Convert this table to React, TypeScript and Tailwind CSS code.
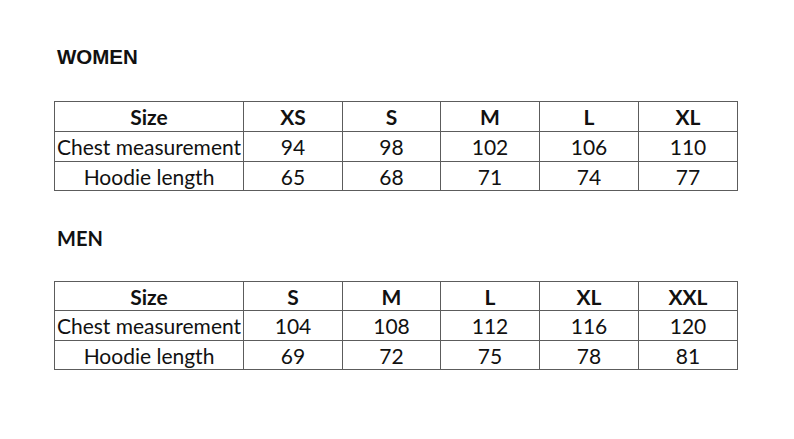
import React from "react";

type Row = { label: string; values: string[]; bold?: boolean; h: string };

function SizeTable({ rows }: { rows: Row[] }) {
  return (
    <table className="border-collapse table-fixed w-[683px] text-[#111]" style={{ fontFamily: "Lato, 'Open Sans', sans-serif" }}>
      <colgroup>
        <col className="w-[189px]" />
        <col className="w-[99px]" />
        <col className="w-[98px]" />
        <col className="w-[99px]" />
        <col className="w-[99px]" />
        <col className="w-[99px]" />
      </colgroup>
      <tbody>
        {rows.map((r, i) => (
          <tr key={i} className={r.h}>
            <td className={`border border-[#5c5c5c] text-center text-[21px] leading-none p-0 whitespace-nowrap ${r.bold ? "font-bold" : ""}`}>
              {r.label}
            </td>
            {r.values.map((v, j) => (
              <td key={j} className={`border border-[#5c5c5c] text-center text-[21px] leading-none p-0 ${r.bold ? "font-bold" : ""}`}>
                {v}
              </td>
            ))}
          </tr>
        ))}
      </tbody>
    </table>
  );
}

export default function App() {
  return (
    <div className="w-[794px] h-[439px] bg-white pl-[54px] pt-[45px]">
      <div className="pl-[3px] text-[20.5px] font-bold leading-[24px] text-[#111]" style={{ fontFamily: "'Liberation Sans', Arial, sans-serif" }}>
        WOMEN
      </div>
      <div className="mt-[32px]">
        <SizeTable
          rows={[
            { label: "Size", values: ["XS", "S", "M", "L", "XL"], bold: true, h: "h-[30px]" },
            { label: "Chest measurement", values: ["94", "98", "102", "106", "110"], h: "h-[30px]" },
            { label: "Hoodie length", values: ["65", "68", "71", "74", "77"], h: "h-[29px]" },
          ]}
        />
      </div>
      <div className="mt-[35px] pl-[3px] text-[20px] font-bold leading-[24px] text-[#111]" style={{ fontFamily: "Lato, sans-serif" }}>
        MEN
      </div>
      <div className="mt-[31px]">
        <SizeTable
          rows={[
            { label: "Size", values: ["S", "M", "L", "XL", "XXL"], bold: true, h: "h-[29px]" },
            { label: "Chest measurement", values: ["104", "108", "112", "116", "120"], h: "h-[30px]" },
            { label: "Hoodie length", values: ["69", "72", "75", "78", "81"], h: "h-[29px]" },
          ]}
        />
      </div>
    </div>
  );
}
